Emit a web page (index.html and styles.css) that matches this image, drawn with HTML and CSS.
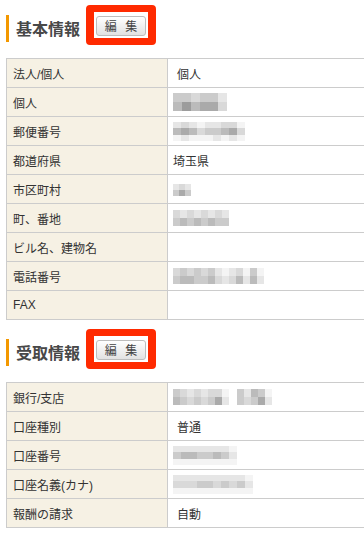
FILE: index.html
```html
<!DOCTYPE html>
<html lang="ja">
<head>
<meta charset="utf-8">
<title>登録情報</title>
<link rel="stylesheet" href="styles.css">
</head>
<body>
<section class="sec">
  <div class="sec-head">
    <h2 class="sec-title">基本情報</h2>
    <div class="mark"><button class="edit-btn" type="button">編 集</button></div>
  </div>
  <table class="info">
    <tr><td class="lbl">法人/個人</td><td class="val"><span class="ind">個人</span></td></tr>
    <tr><td class="lbl">個人</td><td class="val">
      <span class="mz mz9"><i class="s3"></i><i class="s4"></i><i class="s3"></i><i class="s6"></i><i class="s2"></i><i class="s4"></i><i class="s3"></i><i class="s5"></i><i class="s3"></i><i class="s5"></i><i class="s1"></i><i class="s2"></i></span>
    </td></tr>
    <tr><td class="lbl">郵便番号</td><td class="val">
      <span class="mz mz3"><i class="s1"></i><i class="s4"></i><i class="s0"></i><i class="s2"></i><i class="s5"></i><i class="s1"></i><i class="s1"></i><i class="s4"></i><i class="s0"></i><i class="s0"></i><i class="s2"></i><i class="s0"></i><i class="s1"></i><i class="s3"></i><i class="s0"></i><i class="s1"></i><i class="s3"></i><i class="s1"></i><i class="s2"></i><i class="s4"></i><i class="s0"></i><i class="s2"></i><i class="s5"></i><i class="s1"></i><i class="s0"></i><i class="s2"></i><i class="s0"></i></span>
    </td></tr>
    <tr><td class="lbl">都道府県</td><td class="val">埼玉県</td></tr>
    <tr><td class="lbl">市区町村</td><td class="val">
      <span class="mz mz6"><i class="s1"></i><i class="s3"></i><i class="s2"></i><i class="s5"></i><i class="s1"></i><i class="s3"></i></span>
    </td></tr>
    <tr><td class="lbl">町、番地</td><td class="val">
      <span class="mz mz7"><i class="s2"></i><i class="s3"></i><i class="s1"></i><i class="s4"></i><i class="s2"></i><i class="s3"></i><i class="s1"></i><i class="s4"></i><i class="s2"></i><i class="s3"></i><i class="s1"></i><i class="s4"></i><i class="s2"></i><i class="s3"></i><i class="s1"></i><i class="s3"></i></span>
    </td></tr>
    <tr><td class="lbl">ビル名、建物名</td><td class="val"></td></tr>
    <tr><td class="lbl">電話番号</td><td class="val">
      <span class="mz mz7"><i class="s2"></i><i class="s3"></i><i class="s3"></i><i class="s4"></i><i class="s2"></i><i class="s4"></i><i class="s3"></i><i class="s3"></i><i class="s2"></i><i class="s3"></i><i class="s3"></i><i class="s4"></i><i class="s1"></i><i class="s2"></i><i class="s0"></i><i class="s1"></i><i class="s1"></i><i class="s2"></i><i class="s2"></i><i class="s4"></i><i class="s0"></i><i class="s1"></i><i class="s3"></i><i class="s4"></i><i class="s0"></i><i class="s1"></i></span>
    </td></tr>
    <tr><td class="lbl">FAX</td><td class="val"></td></tr>
  </table>
</section>
<section class="sec">
  <div class="sec-head">
    <h2 class="sec-title">受取情報</h2>
    <div class="mark"><button class="edit-btn" type="button">編 集</button></div>
  </div>
  <table class="info">
    <tr><td class="lbl">銀行/支店</td><td class="val">
      <span class="mz mz7"><i class="s3"></i><i class="s4"></i><i class="s2"></i><i class="s3"></i><i class="s1"></i><i class="s2"></i><i class="s2"></i><i class="s3"></i><i class="s1"></i><i class="s2"></i><i class="s2"></i><i class="s3"></i><i class="s2"></i><i class="s5"></i><i class="s0"></i><i class="s1"></i></span><span class="mz mz7 gap"><i class="s3"></i><i class="s3"></i><i class="s1"></i><i class="s2"></i><i class="s4"></i><i class="s3"></i><i class="s3"></i><i class="s5"></i><i class="s0"></i><i class="s1"></i></span>
    </td></tr>
    <tr><td class="lbl">口座種別</td><td class="val"><span class="ind">普通</span></td></tr>
    <tr><td class="lbl">口座番号</td><td class="val">
      <span class="mz mz3"><i class="s1"></i><i class="s3"></i><i class="s0"></i><i class="s1"></i><i class="s4"></i><i class="s0"></i><i class="s1"></i><i class="s4"></i><i class="s0"></i><i class="s1"></i><i class="s3"></i><i class="s0"></i><i class="s1"></i><i class="s3"></i><i class="s0"></i><i class="s1"></i><i class="s4"></i><i class="s0"></i><i class="s1"></i><i class="s3"></i><i class="s0"></i><i class="s0"></i><i class="s1"></i><i class="s0"></i></span>
    </td></tr>
    <tr><td class="lbl">口座名義(カナ)</td><td class="val">
      <span class="mz mz3"><i class="s1"></i><i class="s2"></i><i class="s0"></i><i class="s1"></i><i class="s2"></i><i class="s0"></i><i class="s1"></i><i class="s2"></i><i class="s0"></i><i class="s1"></i><i class="s3"></i><i class="s0"></i><i class="s1"></i><i class="s3"></i><i class="s0"></i><i class="s1"></i><i class="s2"></i><i class="s0"></i><i class="s1"></i><i class="s3"></i><i class="s0"></i><i class="s1"></i><i class="s2"></i><i class="s0"></i><i class="s1"></i><i class="s3"></i><i class="s0"></i><i class="s0"></i><i class="s1"></i><i class="s0"></i></span>
    </td></tr>
    <tr><td class="lbl">報酬の請求</td><td class="val"><span class="ind">自動</span></td></tr>
  </table>
</section>
</body>
</html>
```
FILE: styles.css
```css
html, body {
  margin: 0;
  background: #fff;
}
body {
  padding-left: 6px;
  font-family: "Noto Sans CJK JP", "Liberation Sans", sans-serif;
}
.sec-head {
  display: flex;
  align-items: flex-start;
  padding-top: 5px;
  margin-bottom: 13px;
}
.sec + .sec .sec-head {
  padding-top: 9px;
}
.sec-title {
  margin: 10px 0 0;
  height: 27px;
  line-height: 27px;
  border-left: 3px solid #f39800;
  padding-left: 7px;
  font-size: 16px;
  font-weight: bold;
  color: #484848;
}
.mark {
  margin-left: 6px;
  border: 7px solid #ff2a00;
  border-left-width: 8px;
  border-right-width: 8px;
  border-radius: 4px;
  padding: 4px 2px 2px;
  background: #fff;
}
.edit-btn {
  display: block;
  width: 50px;
  height: 20px;
  padding: 0 0 0 3px;
  border: 1px solid #bdbdbd;
  border-radius: 3px;
  background: linear-gradient(#ffffff, #e2e2e2);
  font: 12px/18px "Noto Sans CJK JP", sans-serif;
  letter-spacing: 3px;
  color: #444;
}
.info {
  border-collapse: collapse;
  width: 358px;
  font-family: "Liberation Sans", "Noto Sans CJK JP", sans-serif;
  font-size: 12px;
  color: #333;
}
.info td {
  border: 1px solid #cccccc;
  height: 28px;
  padding: 0 5px;
  vertical-align: middle;
  box-sizing: border-box;
}
.info .val {
  border-right: none;
}
.info tr {
  height: 29px;
}
.info .lbl {
  width: 161px;
  padding-left: 6px;
  background: #f6f1e4;
  white-space: nowrap;
}
.ind {
  padding-left: 4px;
}
.mz {
  display: inline-grid;
  grid-auto-flow: column;
  vertical-align: middle;
  filter: blur(0.6px);
}
.mz9 {
  grid-template-rows: 9px 9px;
  grid-auto-columns: 9px;
}
.mz7 {
  grid-template-rows: 8px 8px;
  grid-auto-columns: 7px;
}
.mz6 {
  grid-template-rows: 6px 6px;
  grid-auto-columns: 6px;
}
.mz3 {
  grid-template-rows: 6px 7px 6px;
  grid-auto-columns: 8px;
}
.gap {
  margin-left: 8px;
}
.mz i { display: block; }
.s0 { background: #f4f4f4; }
.s1 { background: #e6e6e6; }
.s2 { background: #d9d9d9; }
.s3 { background: #cbcbcb; }
.s4 { background: #bbbbbb; }
.s5 { background: #aaaaaa; }
.s6 { background: #9c9c9c; }
```
